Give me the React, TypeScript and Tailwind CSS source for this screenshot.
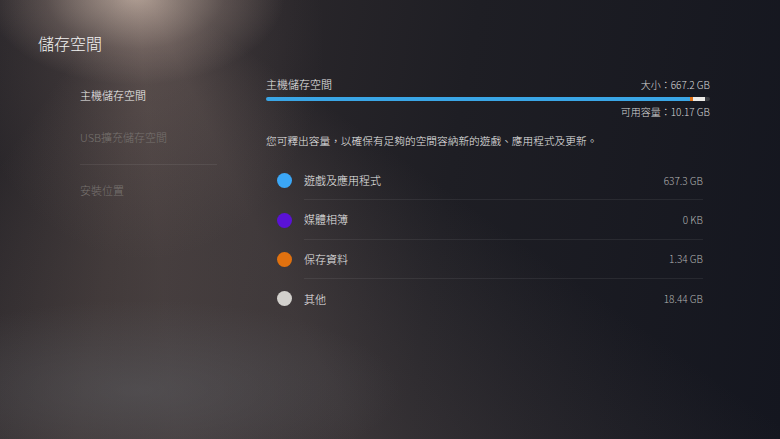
import React from "react";

const rows = [
  { label: "遊戲及應用程式", value: "637.3 GB", color: "bg-[#3ba7f6]" },
  { label: "媒體相簿", value: "0 KB", color: "bg-[#5a12d6]" },
  { label: "保存資料", value: "1.34 GB", color: "bg-[#e0710f]" },
  { label: "其他", value: "18.44 GB", color: "bg-[#d2d0cc]" },
];

export default function App() {
  return (
    <div
      className="relative w-[780px] h-[439px] overflow-hidden text-[#ececec] bg-[#17181f] font-light"
      style={{ fontFamily: '"Noto Sans CJK TC", "Noto Sans", sans-serif' }}
    >
      <div className="absolute inset-0 bg-[linear-gradient(100deg,#29262a_0%,#302b2d_18%,#29262a_34%,#1e1e24_56%,#14161f_100%)]" />
      <div className="absolute inset-0 bg-[conic-gradient(from_125deg_at_135px_-30px,transparent_0deg,rgba(150,130,122,0.22)_30deg,rgba(150,130,122,0.24)_50deg,rgba(150,130,122,0.12)_70deg,transparent_90deg)]" />
      <div className="absolute inset-0 bg-[radial-gradient(ellipse_150px_90px_at_135px_-5px,rgba(215,195,180,0.8),rgba(170,150,140,0.3)_60%,transparent_100%)]" />
      <div className="absolute inset-0 bg-[radial-gradient(ellipse_180px_220px_at_145px_40px,rgba(140,120,115,0.25),transparent_100%)]" />
      <div className="absolute inset-0 bg-[radial-gradient(ellipse_260px_90px_at_140px_390px,rgba(95,97,102,0.45),transparent_100%)]" />

      <div className="relative flex flex-col">
        <div className="pt-[31px] pl-[38px] text-[16px] leading-[24px] text-[#f2f2f2]">
          儲存空間
        </div>

        <div className="flex mt-[17px]">
          <nav className="ml-[80px] w-[137px] flex flex-col text-[11px] leading-[20px]">
            <div className="mt-[13px] text-[#f4f4f4]">主機儲存空間</div>
            <div className="mt-[22px] text-[#77726f]">USB擴充儲存空間</div>
            <div className="mt-[17px] h-px bg-[rgba(255,255,255,0.07)]" />
            <div className="mt-[15px] text-[#77726f]">安裝位置</div>
          </nav>

          <section className="ml-[49px] w-[444px] flex flex-col">
            <div className="flex items-center justify-between h-[24px]">
              <span className="text-[11px] text-[#eeeeee]">主機儲存空間</span>
              <span className="text-[10px] text-[#dcdcdc]">大小：667.2 GB</span>
            </div>
            <div className="mt-[1px] h-[4px] flex rounded-full overflow-hidden bg-[#3a3b40]">
              <div className="w-[424px] bg-[#3aa6e6]" />
              <div className="w-[3px] bg-[#e2741a]" />
              <div className="w-[12px] bg-[#ecebe8]" />
            </div>
            <div className="mt-[2px] h-[16px] flex items-center justify-end text-[10px] text-[#d8d8d8]">
              可用容量：10.17 GB
            </div>
            <div className="mt-[12px] h-[20px] flex items-center text-[10.7px] text-[#ececec] whitespace-nowrap">
              您可釋出容量，以確保有足夠的空間容納新的遊戲、應用程式及更新。
            </div>

            <div className="mt-[10px] flex flex-col">
              {rows.map((r, i) => (
                <div key={r.label} className="flex items-stretch h-[39.4px]">
                  <div className="w-[38px] flex items-center pl-[11px]">
                    <div className={`w-[15px] h-[15px] rounded-full ${r.color}`} />
                  </div>
                  <div
                    className={`w-[399px] flex items-center justify-between ${
                      i < rows.length - 1 ? "border-b border-[rgba(255,255,255,0.07)]" : ""
                    }`}
                  >
                    <span className="text-[11px] text-[#ececec]">{r.label}</span>
                    <span className="text-[10px] text-[#b4b4b4]">{r.value}</span>
                  </div>
                </div>
              ))}
            </div>
          </section>
        </div>
      </div>
    </div>
  );
}
